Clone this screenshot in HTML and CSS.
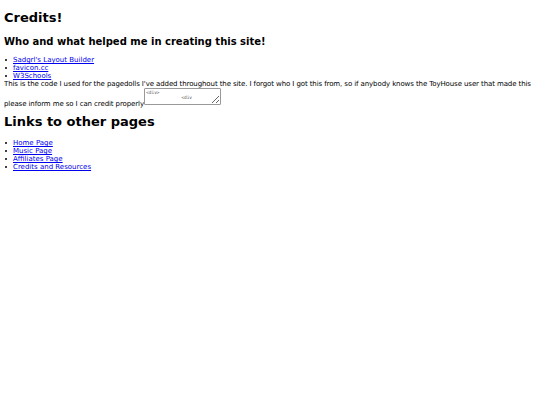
FILE: index.html
```html
<!DOCTYPE html>
<html>
<head>
<meta charset="utf-8">
<link rel="stylesheet" href="styles.css">
</head>
<body>
<h1 class="title">Credits!</h1>
<h2 class="subtitle">Who and what helped me in creating this site!</h2>
<ul class="list">
<li class="item"><a href="#">Sadgrl's Layout Builder</a></li>
<li class="item"><a href="#">favicon.cc</a></li>
<li class="item"><a href="#">W3Schools</a></li>
</ul>
<p class="text">This is the code I used for the pagedolls I've added throughout the site. I forgot who I got this from, so if anybody knows the ToyHouse user that made this please inform me so I can credit properly<textarea class="code">&lt;div&gt;
             &lt;div</textarea></p>
<h1 class="heading">Links to other pages</h1>
<ul class="list">
<li class="item"><a href="#">Home Page</a></li>
<li class="item"><a href="#">Music Page</a></li>
<li class="item"><a href="#">Affiliates Page</a></li>
<li class="item"><a href="#">Credits and Resources</a></li>
</ul>
</body>
</html>
```
FILE: styles.css
```css
body {
  margin: 4px;
  font-family: "DejaVu Sans", Verdana, sans-serif;
  font-size: 7px;
  line-height: 8px;
  color: #000;
  background: #fff;
}
.title, .heading {
  font-size: 13px;
  line-height: 15px;
  margin: 6px 0 0;
}
.heading {
  margin: 6px 0 10px;
}
.subtitle {
  font-size: 10px;
  line-height: 12px;
  margin: 11px 0 8px;
}
.list {
  margin: 0;
  padding-left: 9px;
  list-style: none;
}
.item {
  position: relative;
}
.item::before {
  content: "";
  position: absolute;
  left: -8px;
  top: 3px;
  width: 2px;
  height: 2px;
  border-radius: 50%;
  background: #000;
}
.list a {
  color: #0000ee;
}
.text {
  margin: 0;
  letter-spacing: -0.1px;
}
.code {
  width: 73px;
  height: 13px;
  font-family: "DejaVu Sans Mono", monospace;
  font-size: 4.5px;
  line-height: 5px;
  color: #555;
  padding: 1px;
  border: 1px solid #999;
  border-radius: 1px;
  resize: both;
  vertical-align: 1px;
  letter-spacing: 0;
}
```
